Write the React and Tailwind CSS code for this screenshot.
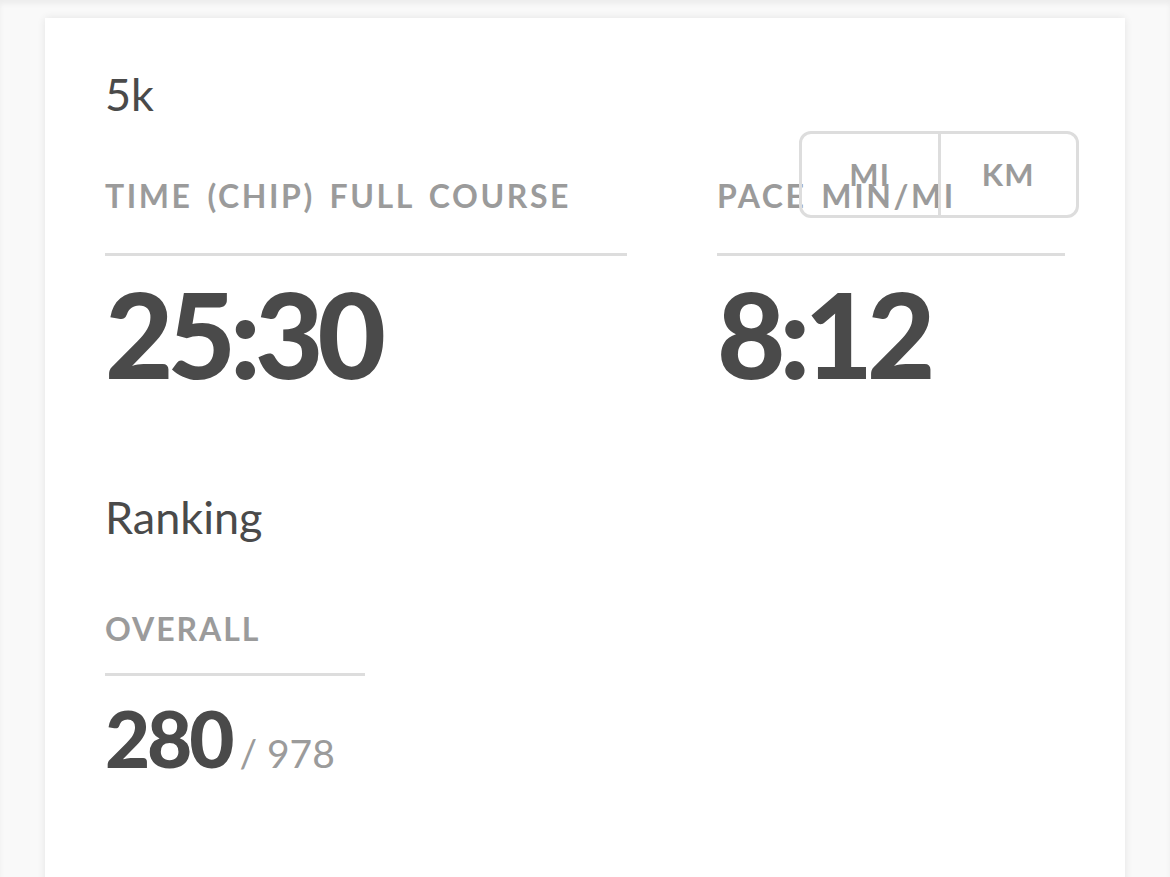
import React, { useState } from 'react';

function StatBlock({ label, value, width, labelPad = 'pb-[41px]' }) {
  return (
    <div className={width}>
      <div className={`text-[32px] leading-[32px] font-bold tracking-[0.08em] [word-spacing:0.14em] whitespace-nowrap text-[#9b9b9b] border-b-[3px] border-[#dddddd] ${labelPad}`}>
        {label}
      </div>
      <div className="mt-[19px] text-[118px] leading-none font-black tracking-[-0.05em] text-[#4a4a4a]">
        {value}
      </div>
    </div>
  );
}

export default function App() {
  const [unit, setUnit] = useState('mi');

  return (
    <div className="h-[877px] overflow-hidden bg-[#f9f9f9] px-[45px] pt-[18px] shadow-[inset_0_4px_5px_rgba(0,0,0,0.05)]" style={{ fontFamily: 'Lato, "Open Sans", sans-serif' }}>
      <div className="relative min-h-[900px] bg-white pl-[60px] pr-[60px] pt-[54px] shadow-[0_0_8px_rgba(0,0,0,0.09)]">
        <h2 className="text-[45px] leading-none font-normal text-[#4a4a4a]">5k</h2>

        {/* MI / KM toggle */}
        <div className="absolute left-[754px] top-[113px] flex h-[87px] w-[280px] rounded-[12px] border-[3px] border-[#dddddd]">
          <button
            onClick={() => setUnit('mi')}
            className="flex-1 border-r-[3px] border-[#dddddd] text-[31px] font-bold tracking-[0.04em] text-[#9b9b9b]"
          >
            MI
          </button>
          <button
            onClick={() => setUnit('km')}
            className="flex-1 text-[31px] font-bold tracking-[0.04em] text-[#9b9b9b]"
          >
            KM
          </button>
        </div>

        <div className="mt-[63px] flex gap-[90px]">
          <StatBlock label="TIME (CHIP) FULL COURSE" value="25:30" width="w-[522px]" />
          <StatBlock label={unit === 'mi' ? 'PACE MIN/MI' : 'PACE MIN/KM'} value={unit === 'mi' ? '8:12' : '5:06'} width="w-[348px]" />
        </div>

        <h2 className="mt-[102px] text-[45px] leading-none font-normal text-[#4a4a4a]">Ranking</h2>

        <div className="mt-[73px] w-[260px]">
          <div className="border-b-[3px] border-[#dddddd] pb-[28px] text-[32px] leading-[32px] font-bold tracking-[0.06em] text-[#9b9b9b]">
            OVERALL
          </div>
          <div className="mt-[23px] flex items-baseline whitespace-nowrap leading-none">
            <span className="text-[78px] font-black tracking-[-0.04em] text-[#4a4a4a]">280</span>
            <span className="ml-[8px] text-[39px] font-normal text-[#9b9b9b]">/ 978</span>
          </div>
        </div>
      </div>
    </div>
  );
}
